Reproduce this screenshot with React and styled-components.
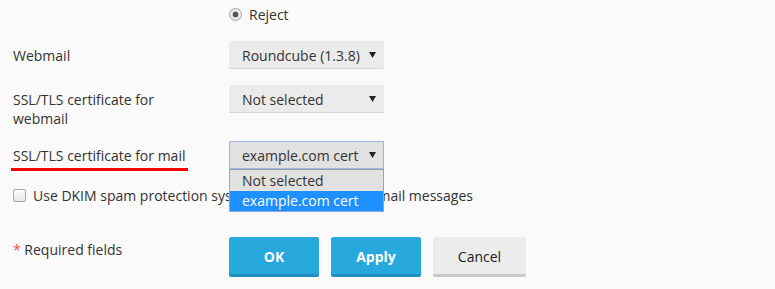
import React from 'react';
import styled, { createGlobalStyle } from 'styled-components';

const GlobalStyle = createGlobalStyle`
  body {
    margin: 0;
    background: #fafafa;
    font-family: "Open Sans", "DejaVu Sans", sans-serif;
    color: #333;
  }
`;

const Form = styled.div`
  padding: 0 13px;
  width: 762px;
  box-sizing: border-box;
`;

const Row = styled.div`
  display: grid;
  grid-template-columns: 216px 1fr;
  align-items: ${({ $top }) => ($top ? 'start' : 'center')};
  margin-top: ${({ $gap }) => $gap || 0}px;
  min-height: 28px;
`;

const Label = styled.div`
  font-size: 14px;
  line-height: 19px;
  color: #333;
  padding-top: ${({ $top }) => ($top ? 5 : 0)}px;
  width: 180px;
`;

const Marked = styled.span`
  display: inline-block;
  margin-left: -2px;
  padding: 0 2px 3px 2px;
  width: 173px;
  border-bottom: 3px solid #f00;
  line-height: 19px;
  margin-top: 5px;
  white-space: nowrap;
`;

const RadioLine = styled.label`
  display: flex;
  align-items: center;
  gap: 7px;
  font-size: 14px;
  color: #333;
`;

const RadioDot = styled.span`
  width: 11px;
  height: 11px;
  border-radius: 50%;
  border: 1px solid #a5a5a5;
  background: radial-gradient(circle, #555 0 2.6px, #e6e6e6 3.2px, #f3f3f3 100%);
`;

const SelectWrap = styled.div`
  position: relative;
  width: 155px;
`;

const Select = styled.div`
  display: flex;
  align-items: center;
  justify-content: space-between;
  box-sizing: border-box;
  height: 28px;
  padding: 0 7px 0 12px;
  font-size: 14px;
  color: #333;
  background: ${({ $open }) => ($open ? '#e1e1e1' : '#ebebeb')};
  border: 1px solid ${({ $open }) => ($open ? '#9ab8e6' : '#ebebeb')};
  border-bottom-color: ${({ $open }) => ($open ? '#9ab8e6' : '#d8d8d8')};
`;

const Arrow = () => (
  <svg width="7" height="6" viewBox="0 0 7 6">
    <path d="M0 0 H7 L3.5 6 Z" fill="#222" />
  </svg>
);

const Menu = styled.ul`
  position: absolute;
  top: 100%;
  left: 0;
  width: 155px;
  box-sizing: border-box;
  margin: 0;
  padding: 0;
  list-style: none;
  border: 1px solid #8da6cf;
  border-top-color: #9a9a9a;
  background: #e1e1e1;
  z-index: 2;
`;

const Option = styled.li`
  height: ${({ $active }) => ($active ? 20 : 21)}px;
  line-height: ${({ $active }) => ($active ? 20 : 21)}px;
  padding-left: 12px;
  font-size: 14px;
  color: ${({ $active }) => ($active ? '#fff' : '#333')};
  background: ${({ $active }) => ($active ? '#1e90ff' : 'transparent')};
`;

const CheckLine = styled.label`
  display: flex;
  align-items: center;
  gap: 7px;
  margin-top: 15px;
  font-size: 14px;
  line-height: 19px;
  color: #333;
`;

const Box = styled.span`
  width: 11px;
  height: 11px;
  border: 1px solid #a5a5a5;
  border-radius: 2px;
  background: linear-gradient(#fdfdfd, #e8e8e8);
`;

const Footer = styled.div`
  display: grid;
  grid-template-columns: 216px 1fr;
  align-items: start;
  margin-top: 32px;
`;

const Required = styled.div`
  font-size: 14px;
  color: #333;
  padding-top: 3px;
  span {
    color: #e0574f;
  }
`;

const Buttons = styled.div`
  display: flex;
  gap: 12px;
`;

const Button = styled.button`
  box-sizing: border-box;
  width: ${({ $w }) => $w}px;
  height: 40px;
  border: 0;
  border-radius: 2px;
  border-bottom: 3px solid ${({ $primary }) => ($primary ? '#2190c0' : '#c9c9c9')};
  background: ${({ $primary }) => ($primary ? '#28a9dd' : '#ececec')};
  color: ${({ $primary }) => ($primary ? '#fff' : '#222')};
  font-family: "Open Sans", sans-serif;
  font-size: 14px;
  font-weight: ${({ $primary }) => ($primary ? 700 : 400)};
  padding: 2px 0 0 0;
`;

export default function App() {
  return (
    <>
      <GlobalStyle />
      <Form>
        <Row>
          <span />
          <RadioLine>
            <RadioDot />
            Reject
          </RadioLine>
        </Row>
        <Row $gap={13}>
          <Label>Webmail</Label>
          <SelectWrap>
            <Select>Roundcube (1.3.8)<Arrow /></Select>
          </SelectWrap>
        </Row>
        <Row $gap={16} $top>
          <Label $top>SSL/TLS certificate for webmail</Label>
          <SelectWrap>
            <Select>Not selected<Arrow /></Select>
          </SelectWrap>
        </Row>
        <Row $gap={13} $top>
          <Label>
            <Marked>SSL/TLS certificate for mail</Marked>
          </Label>
          <SelectWrap>
            <Select $open>example.com cert<Arrow /></Select>
            <Menu>
              <Option>Not selected</Option>
              <Option $active>example.com cert</Option>
            </Menu>
          </SelectWrap>
        </Row>
        <CheckLine>
          <Box />
          Use DKIM spam protection system to sign outgoing email messages
        </CheckLine>
        <Footer>
          <Required><span>*</span> Required fields</Required>
          <Buttons>
            <Button $primary $w={90}>OK</Button>
            <Button $primary $w={90}>Apply</Button>
            <Button $w={93}>Cancel</Button>
          </Buttons>
        </Footer>
      </Form>
    </>
  );
}
